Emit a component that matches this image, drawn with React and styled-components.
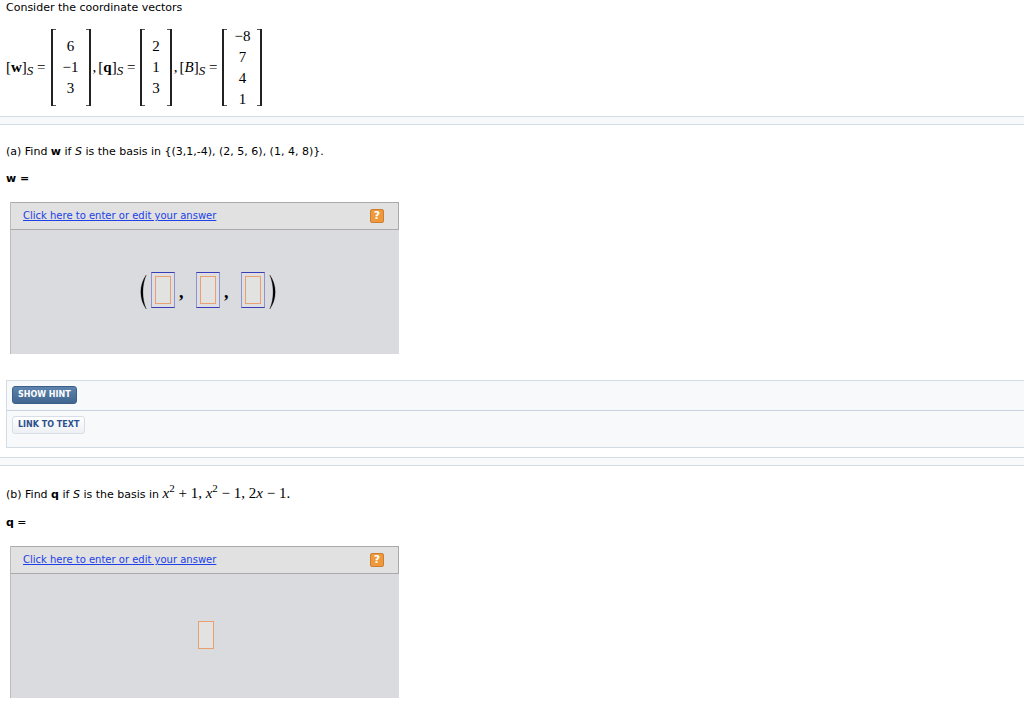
import React from "react";
import styled, { createGlobalStyle } from "styled-components";

const App = () => {
  return (
    <>
      <GlobalStyle />
      <main>
        <Intro>
          <p>Consider the coordinate vectors</p>
          <Equations>
            <Vector name={<b>w</b>} values={["6", "−1", "3"]} />
            <span>,</span>
            <Vector name={<b>q</b>} values={["2", "1", "3"]} />
            <span>,</span>
            <Vector name={<i>B</i>} values={["−8", "7", "4", "1"]} />
          </Equations>
        </Intro>
        <Divider />
        <Part>
          <Question>
            (a) Find <b>w</b> if <i>S</i> is the basis in {"{"}(3,1,-4), (2, 5,
            6), (1, 4, 8){"}"}.
          </Question>
          <Label>
            <b>w =</b>
          </Label>
          <AnswerPad>
            <Tuple>
              <Paren />
              <Slot>
                <Blank aria-label="w, first entry" />
              </Slot>
              <Comma>,</Comma>
              <Slot>
                <Blank aria-label="w, second entry" />
              </Slot>
              <Comma>,</Comma>
              <Slot>
                <Blank aria-label="w, third entry" />
              </Slot>
              <Paren right />
            </Tuple>
          </AnswerPad>
        </Part>
        <Help>
          <HelpRow>
            <HintButton type="button">SHOW HINT</HintButton>
          </HelpRow>
          <HelpRow $last>
            <TextButton type="button">LINK TO TEXT</TextButton>
          </HelpRow>
        </Help>
        <Divider />
        <Part>
          <Question $math>
            (b) Find <b>q</b> if <i>S</i> is the basis in{" "}
            <Polynomials>
              <i>x</i>
              <sup>2</sup> + 1, <i>x</i>
              <sup>2</sup> − 1, 2<i>x</i> − 1.
            </Polynomials>
          </Question>
          <Label>
            <b>q</b> =
          </Label>
          <AnswerPad>
            <Blank aria-label="q" />
          </AnswerPad>
        </Part>
      </main>
    </>
  );
};

const Vector = ({ name, values }) => (
  <VectorGroup>
    <span>
      [{name}]<Sub>S</Sub> =
    </span>
    <Matrix>
      {values.map((value, i) => (
        <span key={i}>{value}</span>
      ))}
    </Matrix>
  </VectorGroup>
);

const AnswerPad = ({ children }) => (
  <Pad>
    <PadHeader>
      <a href="#answer">Click here to enter or edit your answer</a>
      <HelpIcon type="button" aria-label="Help">
        ?
      </HelpIcon>
    </PadHeader>
    <PadBody>{children}</PadBody>
  </Pad>
);

const Paren = ({ right }) => (
  <svg width="7" height="40" viewBox="0 -4 7 40" aria-hidden="true">
    <path
      d={
        right
          ? "M0.8 1C8 11 8 25 0.8 35C5.2 25 5.2 11 0.8 1Z"
          : "M6.2 1C-1 11 -1 25 6.2 35C1.8 25 1.8 11 6.2 1Z"
      }
      fill="#000"
      stroke="#000"
      strokeWidth="0.3"
    />
  </svg>
);

const GlobalStyle = createGlobalStyle`
  * {
    box-sizing: border-box;
  }
  body {
    margin: 0;
    background: white;
    color: black;
    font-family: Verdana, "DejaVu Sans", sans-serif;
    font-size: 11px;
    line-height: 14px;
  }
  p {
    margin: 0;
  }
`;

const Intro = styled.section`
  padding: 1px 6px 10px;
`;

const Equations = styled.div`
  display: flex;
  align-items: center;
  gap: 2px;
  margin-top: 14px;
  font-family: "Liberation Serif", serif;
  font-size: 15px;
  line-height: 21px;
`;

const VectorGroup = styled.div`
  display: flex;
  align-items: center;
  gap: 5px;
  white-space: nowrap;
`;

const Sub = styled.i`
  position: relative;
  top: 3px;
  font-size: 13px;
`;

const Matrix = styled.div`
  display: flex;
  flex-direction: column;
  align-items: center;
  justify-content: center;
  height: 77px;
  padding: 0 10px;
  border: solid #222;
  border-width: 0 2px;
  background:
    linear-gradient(#555, #555) 0 0 / 3px 1px no-repeat,
    linear-gradient(#555, #555) 100% 0 / 3px 1px no-repeat,
    linear-gradient(#555, #555) 0 100% / 3px 1px no-repeat,
    linear-gradient(#555, #555) 100% 100% / 3px 1px no-repeat;
`;

const Divider = styled.div`
  height: 9px;
  border: solid #d3dbe3;
  border-width: 1px 0;
  background: #f7f9fb;
`;

const Part = styled.section`
  padding: 20px 6px 0;
`;

const Question = styled.p`
  min-height: ${({ $math }) => ($math ? "17px" : "14px")};
`;

const Polynomials = styled.span`
  font-family: "Liberation Serif", serif;
  font-size: 15px;
  sup {
    font-size: 11px;
    line-height: 0;
    vertical-align: 6px;
  }
`;

const Label = styled.p`
  margin-top: 13px;
`;

const Pad = styled.div`
  max-width: 389px;
  height: 152px;
  margin: 16px 4px 0;
  display: flex;
  flex-direction: column;
  border-left: 1px solid #bbb;
  background: #dadbdf;
`;

const PadHeader = styled.div`
  display: flex;
  align-items: center;
  justify-content: space-between;
  height: 28px;
  padding: 0 14px 0 12px;
  border: 1px solid #aaa;
  border-left: 0;
  background: #e1e1e1;
  a {
    color: #2040e8;
    font-size: 10px;
  }
`;

const HelpIcon = styled.button`
  width: 14px;
  height: 14px;
  padding: 0;
  border: 1px solid #cc7f30;
  border-radius: 2px;
  background: #ee9a3c;
  color: white;
  font: bold 11px/12px "DejaVu Sans", sans-serif;
`;

const PadBody = styled.div`
  flex: 1;
  display: flex;
  align-items: center;
  justify-content: center;
  padding: 0 0 2px 2px;
`;

const Tuple = styled.div`
  display: flex;
  align-items: center;
  gap: 4px;
  padding: 0 0 2px 4px;
`;

const Slot = styled.span`
  display: flex;
  padding: 3px;
  border: 1px solid;
  border-color: #3a3cb8 #9092cc;
  background: #dfdfe1;
`;

const Blank = styled.input`
  width: 16px;
  height: 28px;
  padding: 0;
  border: 1px solid #e8a070;
  border-radius: 0;
  background: #e2e2e1;
`;

const Comma = styled.span`
  width: 13px;
  padding-top: 4px;
  font: bold 18px/36px "Liberation Serif", serif;
`;

const Help = styled.section`
  margin: 26px 0 9px 6px;
  border: solid #d3dbe3;
  border-width: 1px 0 1px 1px;
  background: #f7f9fb;
`;

const HelpRow = styled.div`
  display: flex;
  align-items: flex-start;
  height: ${({ $last }) => ($last ? "36px" : "30px")};
  padding: 5px;
  border-bottom: ${({ $last }) => ($last ? "0" : "1px solid #c9d3df")};
`;

const HelpButton = styled.button`
  height: 18px;
  padding: 0 5px;
  border-radius: 3px;
  font: bold 8px/16px Verdana, "DejaVu Sans", sans-serif;
`;

const HintButton = styled(HelpButton)`
  border: 1px solid #3c5f87;
  background: linear-gradient(#5d84ae, #41668f);
  color: white;
`;

const TextButton = styled(HelpButton)`
  border: 1px solid #d8dee6;
  background: linear-gradient(#fff, #edf0f4);
  color: #2d508c;
`;

export default App;
